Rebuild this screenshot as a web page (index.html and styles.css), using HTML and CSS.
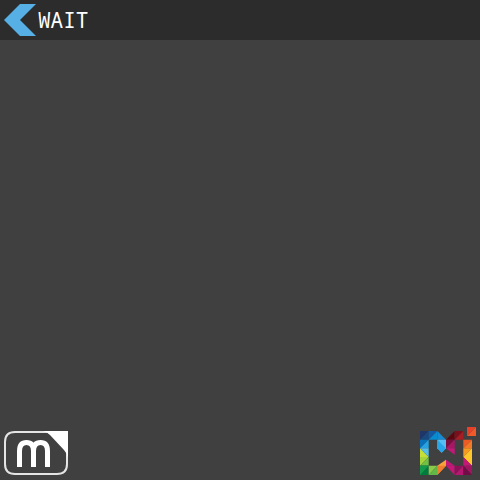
FILE: index.html
```
<!DOCTYPE html>
<html lang="en">
<head>
<meta charset="utf-8">
<title>Wait</title>
<link rel="stylesheet" href="styles.css">
</head>
<body>
<header class="bar">
  <button class="back" type="button" aria-label="Back">
    <svg width="32" height="32" viewBox="0 0 32 32" aria-hidden="true"><path fill="#57b0e5" d="M16 0H32L16 16L32 32H16L0 16Z"/></svg>
  </button>
  <h1 class="title">WAIT</h1>
</header>
<main class="content"></main>
<footer class="logos">
  <svg class="brand" width="66" height="46" viewBox="0 0 66 46" aria-hidden="true">
    <path fill="none" stroke="#e4e4e4" stroke-width="2" d="M44 3H12Q2 3 2 13V35Q2 45 12 45H54Q64 45 64 35V22"/>
    <path fill="#fff" d="M40 2H65V29Q64 24 61 21L47 6Q44 3 40 2Z"/>
    <path fill="none" stroke="#fff" stroke-width="5" d="M16.500 38V22C16.500 16 19 13.500 23.500 13.500C28 13.500 30.500 16 30.500 22V38M30.500 22C30.500 16 33 13.500 37.500 13.500C42 13.500 44.500 16 44.500 22V38"/>
  </svg>
  <svg class="gems" width="56" height="48" viewBox="24 21 168 144" aria-hidden="true">
    <path fill="#203568" d="M24 33H50L24 59Z"/>
    <path fill="#17487f" d="M50 33V59H24Z"/>
    <path fill="#1459a5" d="M50 33H76L50 59Z"/>
    <path fill="#078bd1" d="M76 33V59H50Z"/>
    <path fill="#168bd4" d="M76 33L102 59H76Z"/>
    <path fill="#55bdf1" d="M76 59H102V85L89 98L76 85Z"/>
    <path fill="#29a4e8" d="M76 59L102 85L89 98L76 85Z"/>
    <path fill="#0871b9" d="M24 59H50L24 85Z"/>
    <path fill="#25a3e2" d="M50 59V85H24Z"/>
    <path fill="#c6df38" d="M24 85L50 111H24Z"/>
    <path fill="#55bdea" d="M24 85H50V111Z"/>
    <path fill="#a5d33b" d="M24 111H50L24 137Z"/>
    <path fill="#72c044" d="M50 111V137H24Z"/>
    <path fill="#007a3d" d="M24 137H50V165H24Z"/>
    <path fill="#14984a" d="M24 137H50L24 165Z"/>
    <path fill="#8acb49" d="M50 137H76L50 165Z"/>
    <path fill="#62b846" d="M76 137V165H50Z"/>
    <path fill="#f5a23a" d="M76 137L102 119V137L76 165Z"/>
    <path fill="#f17d30" d="M76 137H102L76 165Z"/>
    <path fill="#5c0610" d="M102 59L128 33V59Z"/>
    <path fill="#79101c" d="M128 33H154L128 59Z"/>
    <path fill="#a71d24" d="M154 33V59H128Z"/>
    <path fill="#7c0c3e" d="M102 59H128L102 85Z"/>
    <path fill="#a81567" d="M128 59V85H102Z"/>
    <path fill="#c41778" d="M102 85H128V104Z"/>
    <path fill="#ed5b25" d="M154 59H180L154 85Z"/>
    <path fill="#f47927" d="M180 59V85H154Z"/>
    <path fill="#f79a21" d="M154 85H180L154 111Z"/>
    <path fill="#ffc62c" d="M180 85V137L154 111Z"/>
    <path fill="#c41778" d="M154 111L180 137H154Z"/>
    <path fill="#c41778" d="M102 119L128 137H102Z"/>
    <path fill="#c41778" d="M102 137H128V165Z"/>
    <path fill="#8d1058" d="M128 137H154L128 165Z"/>
    <path fill="#b51770" d="M154 137V165H128Z"/>
    <path fill="#a01462" d="M154 137H180V165Z"/>
    <path fill="#710d45" d="M154 137L180 165H154Z"/>
    <path fill="#e9402a" d="M165 21H192L165 48Z"/>
    <path fill="#f05a28" d="M192 21V48H165Z"/>
  </svg>
</footer>
</body>
</html>
```
FILE: styles.css
```
* { box-sizing: border-box; }
body {
  margin: 0;
  min-height: 100vh;
  display: flex;
  flex-direction: column;
  background: #404040;
  color: #fff;
  font-family: "Noto Sans Mono", "DejaVu Sans Mono", monospace;
}
.bar {
  display: flex;
  align-items: flex-start;
  gap: 2px;
  height: 40px;
  padding: 4px;
  background: #2c2c2c;
}
.back {
  display: block;
  padding: 0;
  border: 0;
  background: none;
}
.back svg, .logos svg { display: block; }
.title {
  margin: 0;
  font-size: 21px;
  font-weight: 400;
  line-height: 32px;
}
.content { flex: 1; }
.logos {
  display: flex;
  justify-content: space-between;
  align-items: flex-end;
  padding: 0 4px 5px 3px;
}
```
